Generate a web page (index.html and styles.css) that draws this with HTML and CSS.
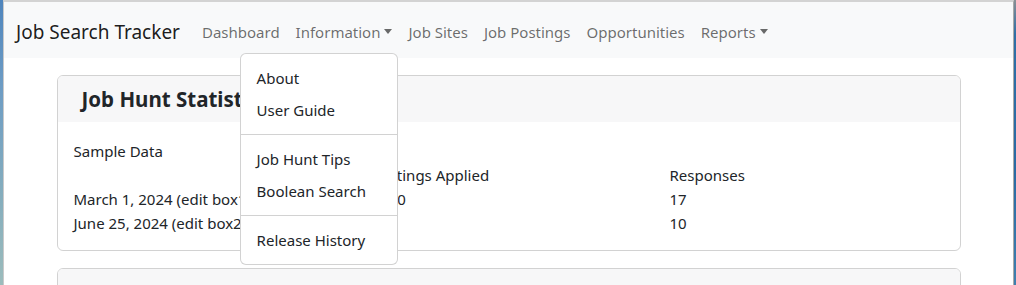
FILE: index.html
```html
<!DOCTYPE html>
<html lang="en">
<head>
  <meta charset="UTF-8">
  <meta name="viewport" content="width=device-width, initial-scale=1.0">
  <title>Job Search Tracker</title>
  <link rel="stylesheet" href="styles.css">
</head>
<body>

  <div class="frame">
    <div class="edge edge-left"></div>

    <div class="page">
      <nav class="navbar">
        <a class="brand" href="#">Job Search Tracker</a>
        <ul class="nav">
          <li><a class="nav-link" href="#">Dashboard</a></li>
          <li class="dropdown">
            <a class="nav-link toggle" href="#">Information</a>
            <ul class="dropdown-menu">
              <li><a class="dropdown-item" href="#">About</a></li>
              <li><a class="dropdown-item" href="#">User Guide</a></li>
              <li><hr class="divider"></li>
              <li><a class="dropdown-item" href="#">Job Hunt Tips</a></li>
              <li><a class="dropdown-item" href="#">Boolean Search</a></li>
              <li><hr class="divider"></li>
              <li><a class="dropdown-item" href="#">Release History</a></li>
            </ul>
          </li>
          <li><a class="nav-link" href="#">Job Sites</a></li>
          <li><a class="nav-link" href="#">Job Postings</a></li>
          <li><a class="nav-link" href="#">Opportunities</a></li>
          <li><a class="nav-link toggle" href="#">Reports</a></li>
        </ul>
      </nav>

      <main class="content">
        <div class="card">
          <div class="card-header">
            <h4>Job Hunt Statistics</h4>
          </div>
          <div class="card-body">
            <div>Sample Data</div>
            <div class="stats">
              <div></div>
              <div>Postings Applied</div>
              <div>Responses</div>

              <div>March 1, 2024 (edit box1)</div>
              <div>1200</div>
              <div>17</div>

              <div>June 25, 2024 (edit box2)</div>
              <div>45</div>
              <div>10</div>
            </div>
          </div>
        </div>

        <div class="card">
          <div class="card-header card-header-empty"></div>
        </div>
      </main>
    </div>

    <div class="edge edge-right"></div>
  </div>

</body>
</html>
```

FILE: styles.css
```css
* {
  box-sizing: border-box;
}

html, body {
  margin: 0;
  height: 100%;
  overflow: hidden;
}

body {
  font-family: 'Noto Sans', 'Liberation Sans', sans-serif;
  font-size: 15px;
  line-height: 24px;
  color: #212529;
  background: #fff;
}

a {
  text-decoration: none;
}

ul {
  list-style: none;
  margin: 0;
  padding: 0;
}

/* window frame around the page */
.frame {
  display: flex;
  height: 100%;
}

.edge {
  flex: none;
}

.edge-left {
  width: 3px;
  background: linear-gradient(#4f85bd, #6d9cc4 30%, #86aebd 70%, #9cbcbc);
}

.edge-right {
  width: 2px;
  background: linear-gradient(#8a8f94, #2f6fa6 12%, #2a6aa3 60%, #3f7fae);
}

.page {
  flex: 1;
  border-top: 2px solid #d3d3d3;
  border-left: 1px solid #c9c9c9;
  border-right: 1px solid #a9a9a9;
  background: #fff;
}

/* navbar */
.navbar {
  display: flex;
  align-items: center;
  padding: 10px 12px 6px;
  background: #f8f9fa;
}

.brand {
  font-size: 19px;
  line-height: 30px;
  padding: 5px 0;
  margin-right: 14px;
  color: rgba(0, 0, 0, 0.9);
}

.nav {
  display: flex;
}

.nav-link {
  display: block;
  padding: 8px;
  color: rgba(0, 0, 0, 0.58);
}

.toggle::after {
  content: "";
  display: inline-block;
  margin-left: 4px;
  vertical-align: 4px;
  border-top: 5px solid;
  border-left: 4px solid transparent;
  border-right: 4px solid transparent;
}

.dropdown {
  position: relative;
}

.dropdown-menu {
  position: absolute;
  top: calc(100% + 1px);
  left: -48px;
  z-index: 10;
  min-width: 158px;
  padding: 8px 0;
  background: #fff;
  border: 1px solid rgba(0, 0, 0, 0.175);
  border-radius: 6px;
}

.dropdown-item {
  display: block;
  padding: 4px 16px;
  color: #212529;
  white-space: nowrap;
}

.divider {
  margin: 8px 0;
  border: 0;
  border-top: 1px solid rgba(0, 0, 0, 0.175);
}

/* cards */
.content {
  max-width: 904px;
  margin: 0 auto;
  padding-top: 17px;
  display: flex;
  flex-direction: column;
  gap: 17px;
}

.card {
  border: 1px solid rgba(0, 0, 0, 0.175);
  border-radius: 6px;
  overflow: hidden;
}

.card-header {
  padding: 9px 24px 8px 24px;
  background: #f7f7f8;
}

.card-header-empty {
  height: 46px;
}

.card-header h4 {
  margin: 0;
  font-size: 20.5px;
  font-weight: 700;
  line-height: 29px;
}

.card-body {
  padding: 17px 16px 15px;
}

.stats {
  display: grid;
  grid-template-columns: 298px 298px 1fr;
}
```
